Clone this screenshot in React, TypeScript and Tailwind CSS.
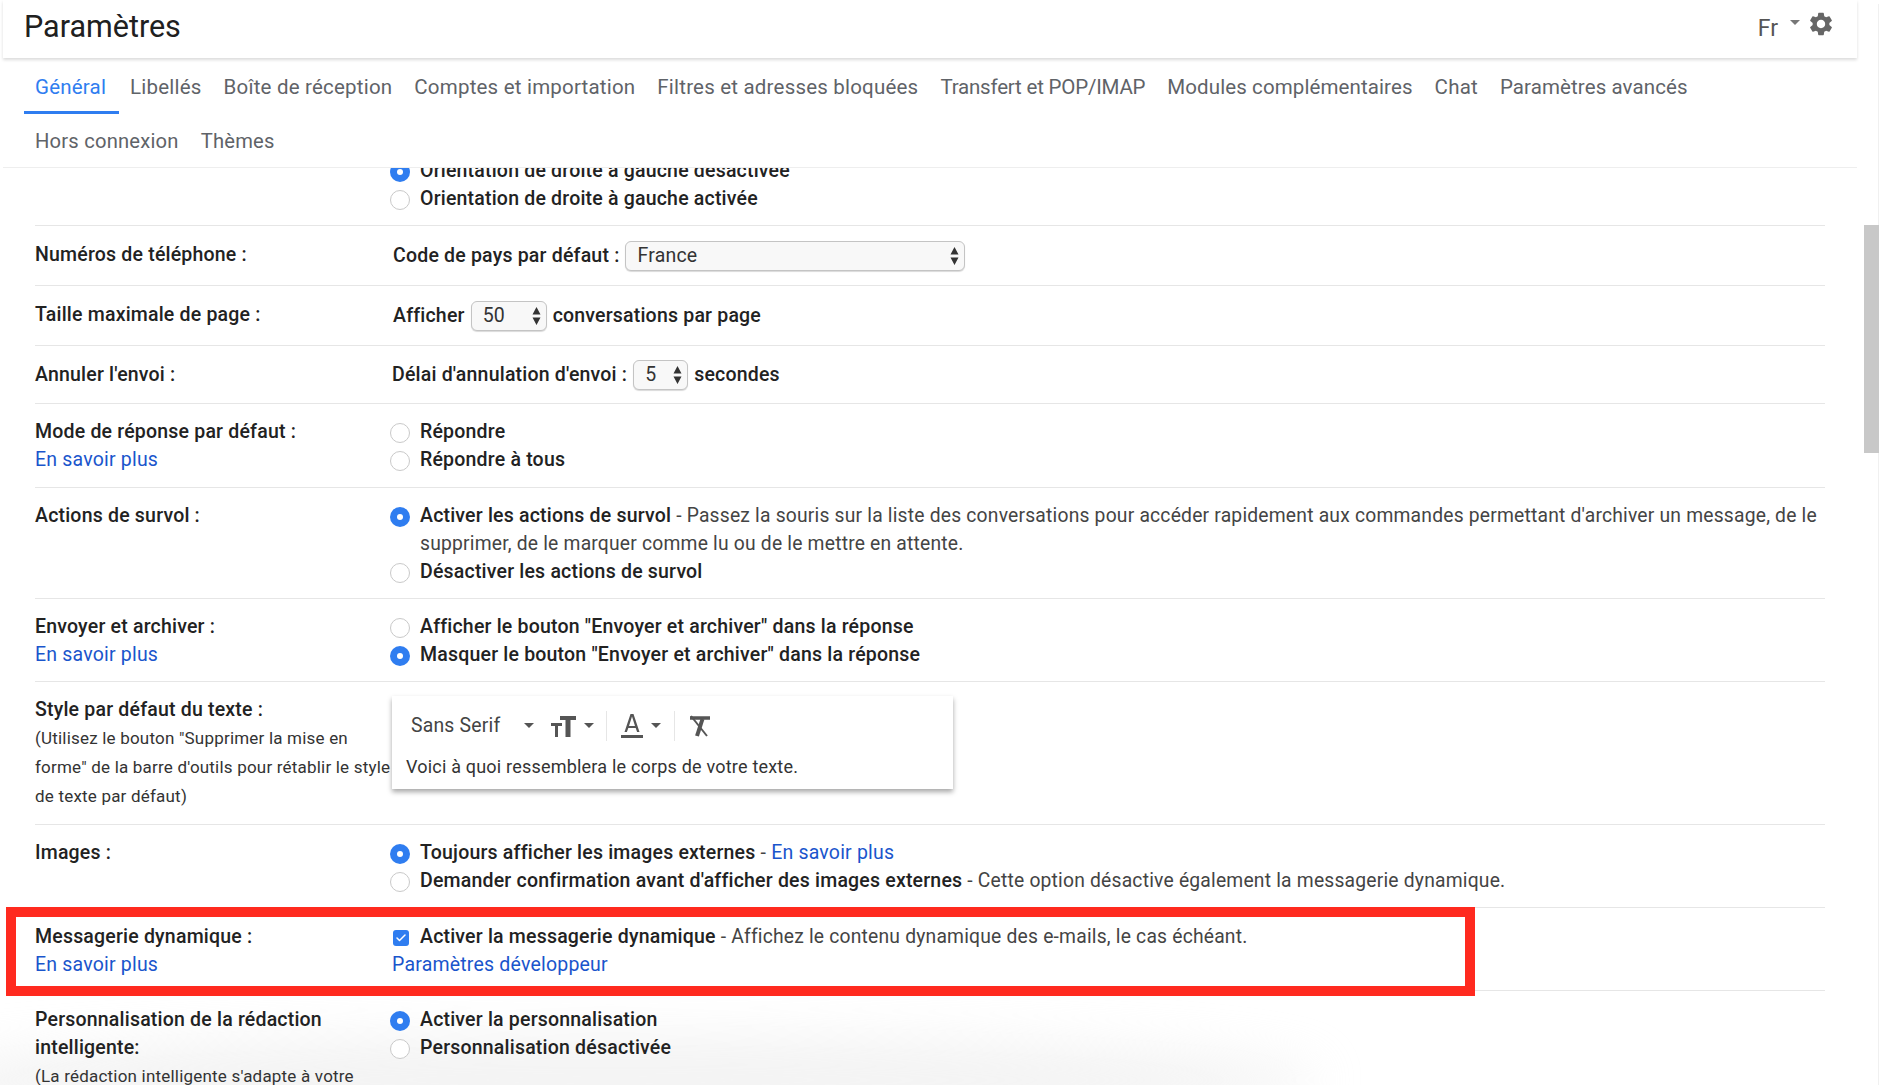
import { ReactNode } from "react";
import { Check } from "lucide-react";
import { MdSettings } from "react-icons/md";

const Radio = ({ on }: { on?: boolean }) => (
  <span
    className={
      on
        ? "mt-[2px] -ml-[3px] flex h-[20px] w-[20px] shrink-0 items-center justify-center rounded-full bg-[#2f7df0]"
        : "mt-[2px] -ml-[3px] flex h-[20px] w-[20px] shrink-0 rounded-full border border-[#c9c9c9] bg-white"
    }
  >
    {on && <span className="h-[6px] w-[6px] rounded-full bg-white" />}
  </span>
);

const Option = ({ on, children }: { on?: boolean; children: ReactNode }) => (
  <div className="flex h-7 items-center gap-[10px]">
    <Radio on={on} />
    <span className="whitespace-nowrap">{children}</span>
  </div>
);

const Link = ({ children }: { children: ReactNode }) => (
  <a className="font-normal text-[#1a55cc]">{children}</a>
);

// texte d'aide à côté des libellés en gras
const Desc = ({ children }: { children: ReactNode }) => (
  <span className="text-[19.300px] font-normal text-[#444]">{children}</span>
);

const Row = ({
  label,
  children,
  className,
}: {
  label: ReactNode;
  children: ReactNode;
  className?: string;
}) => (
  <div
    className={
      "relative grid w-[1790px] grid-cols-[358px_1fr] border-b border-[#e6e6e6] " +
      (className ?? "pb-[12px] pt-[14px]")
    }
  >
    <div className="leading-7">{label}</div>
    <div className="leading-7">{children}</div>
  </div>
);

const NativeSelect = ({ value, className }: { value: string; className: string }) => (
  <span
    className={
      "relative inline-flex h-[30px] items-center rounded-[6px] border border-[#c4c4c4] bg-[#f8f8f8] pl-[11px] font-normal text-[#333] shadow-[0_1px_1px_rgba(0,0,0,0.15)] " +
      className
    }
  >
    {value}
    <svg className="absolute right-[5px] top-[5px]" width="9" height="18" viewBox="0 0 9 18">
      <path d="M4.500 0 8.500 7.500H0.500zM4.500 18 0.500 10.500h8z" fill="#333" />
    </svg>
  </span>
);

const Caret = ({ className }: { className?: string }) => (
  <span className={"h-0 w-0 border-x-[5px] border-t-[5px] border-x-transparent border-t-[#555] " + (className ?? "")} />
);

const tabsLine1 = [
  { name: "Libellés", cls: "" },
  { name: "Boîte de réception", cls: "" },
  { name: "Comptes et importation", cls: "" },
  { name: "Filtres et adresses bloquées", cls: "" },
  { name: "Transfert et POP/IMAP", cls: "tracking-[-0.2px]" },
  { name: "Modules complémentaires", cls: "tracking-[0.1px]" },
  { name: "Chat", cls: "" },
  { name: "Paramètres avancés", cls: "tracking-[0.1px]" },
];

export default function App() {
  return (
    <div className="relative h-[1090px] w-[1896px] overflow-hidden bg-white font-['Roboto',sans-serif] text-[19.5px] tracking-[0.2px] text-[#222]">
      {/* ombre floue en bas */}
      <div className="pointer-events-none absolute -bottom-[35px] -left-[100px] h-[90px] w-[1420px] rounded-[50%] bg-[#e8e8e8] opacity-50 blur-xl" />

      {/* haut de page */}
      <header className="ml-[3px] flex h-[58px] w-[1854px] items-center justify-between shadow-[0_2px_3px_rgba(0,0,0,0.14)]">
        <h1 className="mb-[5px] ml-[21px] text-[30.500px] font-normal tracking-normal text-[#202020]">Paramètres</h1>
        <div className="mr-[22px] flex items-center text-[#555]">
          <span className="text-[23px] tracking-normal">Fr</span>
          <span className="mb-[13px] ml-[12px] h-0 w-0 border-x-[5px] border-t-[5px] border-x-transparent border-t-[#777]" />
          <MdSettings size={28} color="#666" className="mb-[10px] ml-[7px]" />
        </div>
      </header>

      {/* onglets */}
      <nav className="ml-[3px] w-[1854px] border-b border-[#eeeeee] text-[20.500px] text-[#5f6368]">
        <div className="flex h-[56px] pl-[21px]">
          <div className="flex items-center border-b-[3px] border-[#2f7df0] pl-[11px] pr-[13px] pt-[5px] text-[#2f7df0]">Général</div>
          {tabsLine1.map((t) => (
            <div key={t.name} className={"flex items-center whitespace-nowrap px-[11px] pt-[2px] " + t.cls}>
              {t.name}
            </div>
          ))}
        </div>
        <div className="flex h-[53px] items-center gap-[22px] pl-[32px] pt-[2px] text-[20.200px]">
          <span>Hors connexion</span>
          <span>Thèmes</span>
        </div>
      </nav>

      {/* lignes de paramètres */}
      <div className="relative h-[922px] w-[1864px] overflow-hidden pl-[35px]">
        <div className="-mt-[25px] font-medium">
          <div className="relative grid w-[1790px] grid-cols-[358px_1fr] border-b border-[#e6e6e6] pb-[12px] pt-[14px]">
            <div />
            <div className="leading-7">
              <Option on>Orientation de droite à gauche désactivée</Option>
              <Option>Orientation de droite à gauche activée</Option>
            </div>
          </div>

          <Row label={<div className="pb-[2px]">Numéros de téléphone :</div>} className="h-[60px] items-center">
            <div className="flex items-center gap-[6px]">
              Code de pays par défaut :
              <NativeSelect value="France" className="w-[340px]" />
            </div>
          </Row>
          <Row label={<div className="pb-[2px]">Taille maximale de page :</div>} className="h-[60px] items-center">
            <div className="flex items-center gap-[6px]">
              Afficher
              <NativeSelect value="50" className="w-[76px]" />
              conversations par page
            </div>
          </Row>
          <Row label="Annuler l'envoi :" className="h-[58px] items-center">
            <div className="-ml-px flex items-center gap-[6px]">
              Délai d'annulation d'envoi :
              <NativeSelect value="5" className="w-[55px]" />
              secondes
            </div>
          </Row>

          <Row
            className="pb-[13px] pt-[14px]"
            label={<>Mode de réponse par défaut :<br /><Link>En savoir plus</Link></>}
          >
            <Option>Répondre</Option>
            <Option>Répondre à tous</Option>
          </Row>

          <Row label="Actions de survol :">
            <div className="flex items-start gap-[10px]">
              <span className="mt-[3px] flex"><Radio on /></span>
              <span>
                Activer les actions de survol
                <Desc> - Passez la souris sur la liste des conversations pour accéder rapidement aux commandes permettant d'archiver un message, de le supprimer, de le marquer comme lu ou de le mettre en attente.</Desc>
              </span>
            </div>
            <Option>Désactiver les actions de survol</Option>
          </Row>

          <Row label={<>Envoyer et archiver :<br /><Link>En savoir plus</Link></>}>
            <Option>Afficher le bouton "Envoyer et archiver" dans la réponse</Option>
            <Option on>Masquer le bouton "Envoyer et archiver" dans la réponse</Option>
          </Row>

          <Row
            className="h-[143px] pt-[14px]"
            label={
              <>
                Style par défaut du texte :
                <p className="whitespace-nowrap text-[17px] font-normal leading-[29px] text-[#333]">
                  (Utilisez le bouton "Supprimer la mise en
                  <br />
                  forme" de la barre d'outils pour rétablir le style
                  <br />
                  de texte par défaut)
                </p>
              </>
            }
          >
            <div className="-ml-px h-[93px] w-[561px] bg-white font-normal shadow-[0_3px_5px_rgba(0,0,0,0.35)]">
              <div className="flex h-[59px] items-center pl-[19px] text-[#444]">
                <span className="w-[113px] text-[19.400px]">Sans Serif</span>
                <Caret />
                <svg className="ml-[17px]" width="25" height="22" viewBox="0 0 25 22" fill="#555">
                  <path d="M9 1h16v4h-5.500v17h-5V5H9zM0 8h11v3H7v11H4V11H0z" />
                </svg>
                <Caret className="ml-[8px]" />
                <span className="ml-[12px] h-[30px] border-l border-[#e6e6e6]" />
                <svg className="ml-[14px]" width="22" height="26" viewBox="0 0 22 26" fill="#555">
                  <path d="M9.500 1h3L18.500 19h-2.400l-1.400-4H7.300l-1.400 4H3.500zM8 13h6L11 3.500zM0 22h22v3H0z" />
                </svg>
                <Caret className="ml-[8px]" />
                <span className="ml-[13px] h-[30px] border-l border-[#e6e6e6]" />
                <svg className="ml-[14px]" width="22" height="22" viewBox="0 0 22 22" fill="none" stroke="#555">
                  <path d="M1 3h20" strokeWidth="3.500" />
                  <path d="M2 1l16 20" strokeWidth="2" />
                  <path d="M13.500 4 8 21" strokeWidth="4" />
                </svg>
              </div>
              <div className="pl-[14px] text-[18px] leading-6 text-[#333]">Voici à quoi ressemblera le corps de votre texte.</div>
            </div>
          </Row>

          <Row label="Images :">
            <Option on>
              Toujours afficher les images externes<span className="font-normal text-[#444]"> - </span>
              <Link>En savoir plus</Link>
            </Option>
            <Option>
              Demander confirmation avant d'afficher des images externes
              <Desc> - Cette option désactive également la messagerie dynamique.</Desc>
            </Option>
          </Row>

          <Row
            className="pb-[11px] pt-[15px]"
            label={<>Messagerie dynamique :<br /><Link>En savoir plus</Link></>}
          >
            <div className="flex h-7 items-center gap-[11px]">
              <span className="mt-[2px] flex h-[16px] w-[16px] items-center justify-center rounded-[3px] bg-[#2f7df0]">
                <Check size={12} color="white" strokeWidth={3} />
              </span>
              <span className="whitespace-nowrap">
                Activer la messagerie dynamique
                <Desc> - Affichez le contenu dynamique des e-mails, le cas échéant.</Desc>
              </span>
            </div>
            <div className="-ml-px"><Link>Paramètres développeur</Link></div>
            {/* cadre rouge posé sur la ligne */}
            <div className="absolute -top-[1px] -left-[29px] h-[89px] w-[1469px] border-[10px] border-[#ff2a1f]" />
          </Row>

          <Row
            className="pb-[11px] pt-[15px]"
            label={
              <>
                Personnalisation de la rédaction
                <br />
                intelligente:
                <p className="text-[17px] font-normal leading-[29px] text-[#333]">(La rédaction intelligente s'adapte à votre</p>
              </>
            }
          >
            <Option on>Activer la personnalisation</Option>
            <Option>Personnalisation désactivée</Option>
          </Row>
        </div>
      </div>

      {/* barre de défilement */}
      <div className="absolute right-[17px] top-[4px] h-[1081px] w-px bg-[#f0f0f0]" />
      <div className="absolute left-[1864px] top-[225px] h-[228px] w-[15px] bg-[#c8c8c8]" />

      {/* bande blanche */}
      <div className="absolute bottom-0 left-0 h-[5px] w-full bg-white" />
    </div>
  );
}
